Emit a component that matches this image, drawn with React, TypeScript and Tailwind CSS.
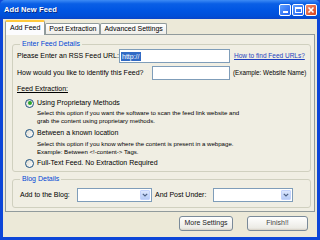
import React from 'react';

// XP-style "Add New Feed" dialog
const font = "font-['Liberation_Sans',Arial,sans-serif]";

function TitleBar() {
  return (
    <div className="h-[19px] flex items-center pl-[4px] pr-[3px] bg-[linear-gradient(180deg,#3d8bf5_0%,#0a5fe6_20%,#0055e2_55%,#004fd8_85%,#0a45c8_100%)] rounded-t-[5px]">
      <span className="text-white font-bold text-[7.5px] leading-none tracking-[0.1px] [text-shadow:1px_1px_0_#0a2a80]">Add New Feed</span>
      <div className="ml-auto flex gap-[1px]">
        <div className="w-[12px] h-[12px] rounded-[2px] border border-white bg-[linear-gradient(135deg,#5fa0ff,#1c5ef0)] flex items-end justify-center pb-[2px]">
          <div className="w-[5px] h-[2px] bg-white" />
        </div>
        <div className="w-[12px] h-[12px] rounded-[2px] border border-white bg-[linear-gradient(135deg,#5fa0ff,#1c5ef0)] flex items-center justify-center">
          <div className="w-[7px] h-[6px] border border-white border-t-2" />
        </div>
        <div className="w-[12px] h-[12px] rounded-[2px] border border-white bg-[linear-gradient(135deg,#f08a6a,#d6411c)] flex items-center justify-center">
          <svg width="8" height="8" viewBox="0 0 8 8">
            <path d="M1.5 1.5 L6.5 6.5 M6.5 1.5 L1.5 6.5" stroke="white" strokeWidth="1.6" />
          </svg>
        </div>
      </div>
    </div>
  );
}

function Radio({ checked }: { checked?: boolean }) {
  return (
    <div className="w-[9px] h-[9px] rounded-full border border-[#1c5180] bg-[linear-gradient(135deg,#dcd9d0,#ffffff)] flex items-center justify-center shrink-0">
      {checked && <div className="w-[4px] h-[4px] rounded-full bg-[#2aa52a]" />}
    </div>
  );
}

function Select({ w }: { w: string }) {
  return (
    <div className={`${w} h-[14px] border border-[#7f9db9] bg-white flex justify-end p-[1px]`}>
      <div className="w-[10px] h-full rounded-[1px] bg-[linear-gradient(180deg,#dbe6fd,#b6cbf6)] border border-[#c3d3fd] flex items-center justify-center">
        <svg width="6" height="4" viewBox="0 0 6 4">
          <path d="M0.8 0.8 L3 3 L5.2 0.8" stroke="#4d6185" strokeWidth="1.2" fill="none" />
        </svg>
      </div>
    </div>
  );
}

function Tab({ label, active }: { label: string; active?: boolean }) {
  if (active) {
    return (
      <div className="relative z-10 h-[15px] px-[4px] bg-[#fcfcfe] border-x border-[#919b9c] border-t-2 border-t-[#ffc83c] rounded-t-[2px] flex items-center text-[7px]">
        {label}
      </div>
    );
  }
  return (
    <div className="mt-[2px] h-[12px] px-[3px] bg-[linear-gradient(180deg,#ffffff,#ecebe6)] border border-b-0 border-[#919b9c] rounded-t-[2px] flex items-center text-[7px]">
      {label}
    </div>
  );
}

export default function App() {
  return (
    <div className={`w-[320px] h-[240px] flex flex-col bg-[#0d46d8] overflow-hidden text-black ${font}`}>
      <TitleBar />
      <div className="flex-1 mx-[3px] mb-[3px] bg-[#ece9d8] flex flex-col px-[2px] pt-[1px]">
        <div className="flex items-end h-[15px] -mb-[1px]">
          <Tab label="Add Feed" active />
          <Tab label="Post Extraction" />
          <Tab label="Advanced Settings" />
        </div>
        <div className="border border-[#919b9c] bg-[#f0eee3] pl-[6px] pr-[3px] pb-[3px] pt-[5px]">
          <fieldset className="border border-[#d0d0bf] rounded-[3px] pl-[4px] pr-[2px] pb-[3px]">
            <legend className="ml-[3px] px-[2px] text-[7px] leading-[8px] text-[#0046d5]">Enter Feed Details</legend>
            <div className="flex items-center h-[14px] mt-[1px]">
              <span className="w-[102px] text-[7px] whitespace-nowrap">Please Enter an RSS Feed URL:</span>
              <div className="w-[111px] h-[14px] border border-[#7f9db9] bg-white flex items-center pl-[1px]">
                <span className="bg-[#316ac5] text-white text-[7px] leading-[9px] px-[1px]">http://</span>
              </div>
              <span className="ml-[4px] text-[6.5px] text-[#1e3fbf] underline whitespace-nowrap">How to find Feed URLs?</span>
            </div>
            <div className="flex items-center h-[14px] mt-[3px]">
              <span className="w-[135px] text-[7px] whitespace-nowrap">How would you like to identify this Feed?</span>
              <div className="w-[78px] h-[14px] border border-[#7f9db9] bg-white" />
              <span className="ml-[3px] text-[6.3px] whitespace-nowrap">(Example: Website Name)</span>
            </div>
            <div className="mt-[5px] h-[9px] flex items-center text-[7px] underline">Feed Extraction:</div>
            <div className="mt-[4px] h-[10px] flex items-center pl-[8px] gap-[3px] text-[7px]">
              <Radio checked />
              <span>Using Proprietary Methods</span>
            </div>
            <div className="mt-[1px] pl-[20px] text-[6.1px] leading-[8px]">
              <div>Select this option if you want the software to scan the feed link website and</div>
              <div>grab the content using proprietary methods.</div>
            </div>
            <div className="mt-[3px] h-[10px] flex items-center pl-[8px] gap-[3px] text-[7px]">
              <Radio />
              <span>Between a known location</span>
            </div>
            <div className="mt-[2px] pl-[20px] text-[6.1px] leading-[8px]">
              <div>Select this option if you know where the content is present in a webpage.</div>
              <div>Example: Between &lt;!-content-&gt; Tags.</div>
            </div>
            <div className="mt-[2px] h-[10px] flex items-center pl-[8px] gap-[3px] text-[7px]">
              <Radio />
              <span>Full-Text Feed. No Extraction Required</span>
            </div>
          </fieldset>
          <fieldset className="mt-[3px] border border-[#d0d0bf] rounded-[3px] pl-[7px] pr-[2px] pb-[5px]">
            <legend className="ml-[0px] px-[2px] text-[7px] leading-[8px] text-[#0046d5]">Blog Details</legend>
            <div className="flex items-center h-[14px] mt-[5px] text-[7px]">
              <span className="w-[57px] whitespace-nowrap">Add to the Blog:</span>
              <Select w="w-[75px]" />
              <span className="w-[61px] pl-[3px] whitespace-nowrap">And Post Under:</span>
              <Select w="w-[80px]" />
            </div>
          </fieldset>
        </div>
        <div className="flex justify-end gap-[14px] mt-[4px] pr-[7px]">
          <button className="w-[54px] h-[15px] rounded-[3px] border border-[#7a8a99] bg-[linear-gradient(180deg,#ffffff,#ecebe5_85%,#d6d0c5)] text-[7px] text-[#222]">More Settings</button>
          <button className="w-[61px] h-[15px] rounded-[3px] border border-[#7a8a99] bg-[linear-gradient(180deg,#ffffff,#ecebe5_85%,#d6d0c5)] text-[7px] text-[#444]">Finish!!</button>
        </div>
      </div>
    </div>
  );
}
